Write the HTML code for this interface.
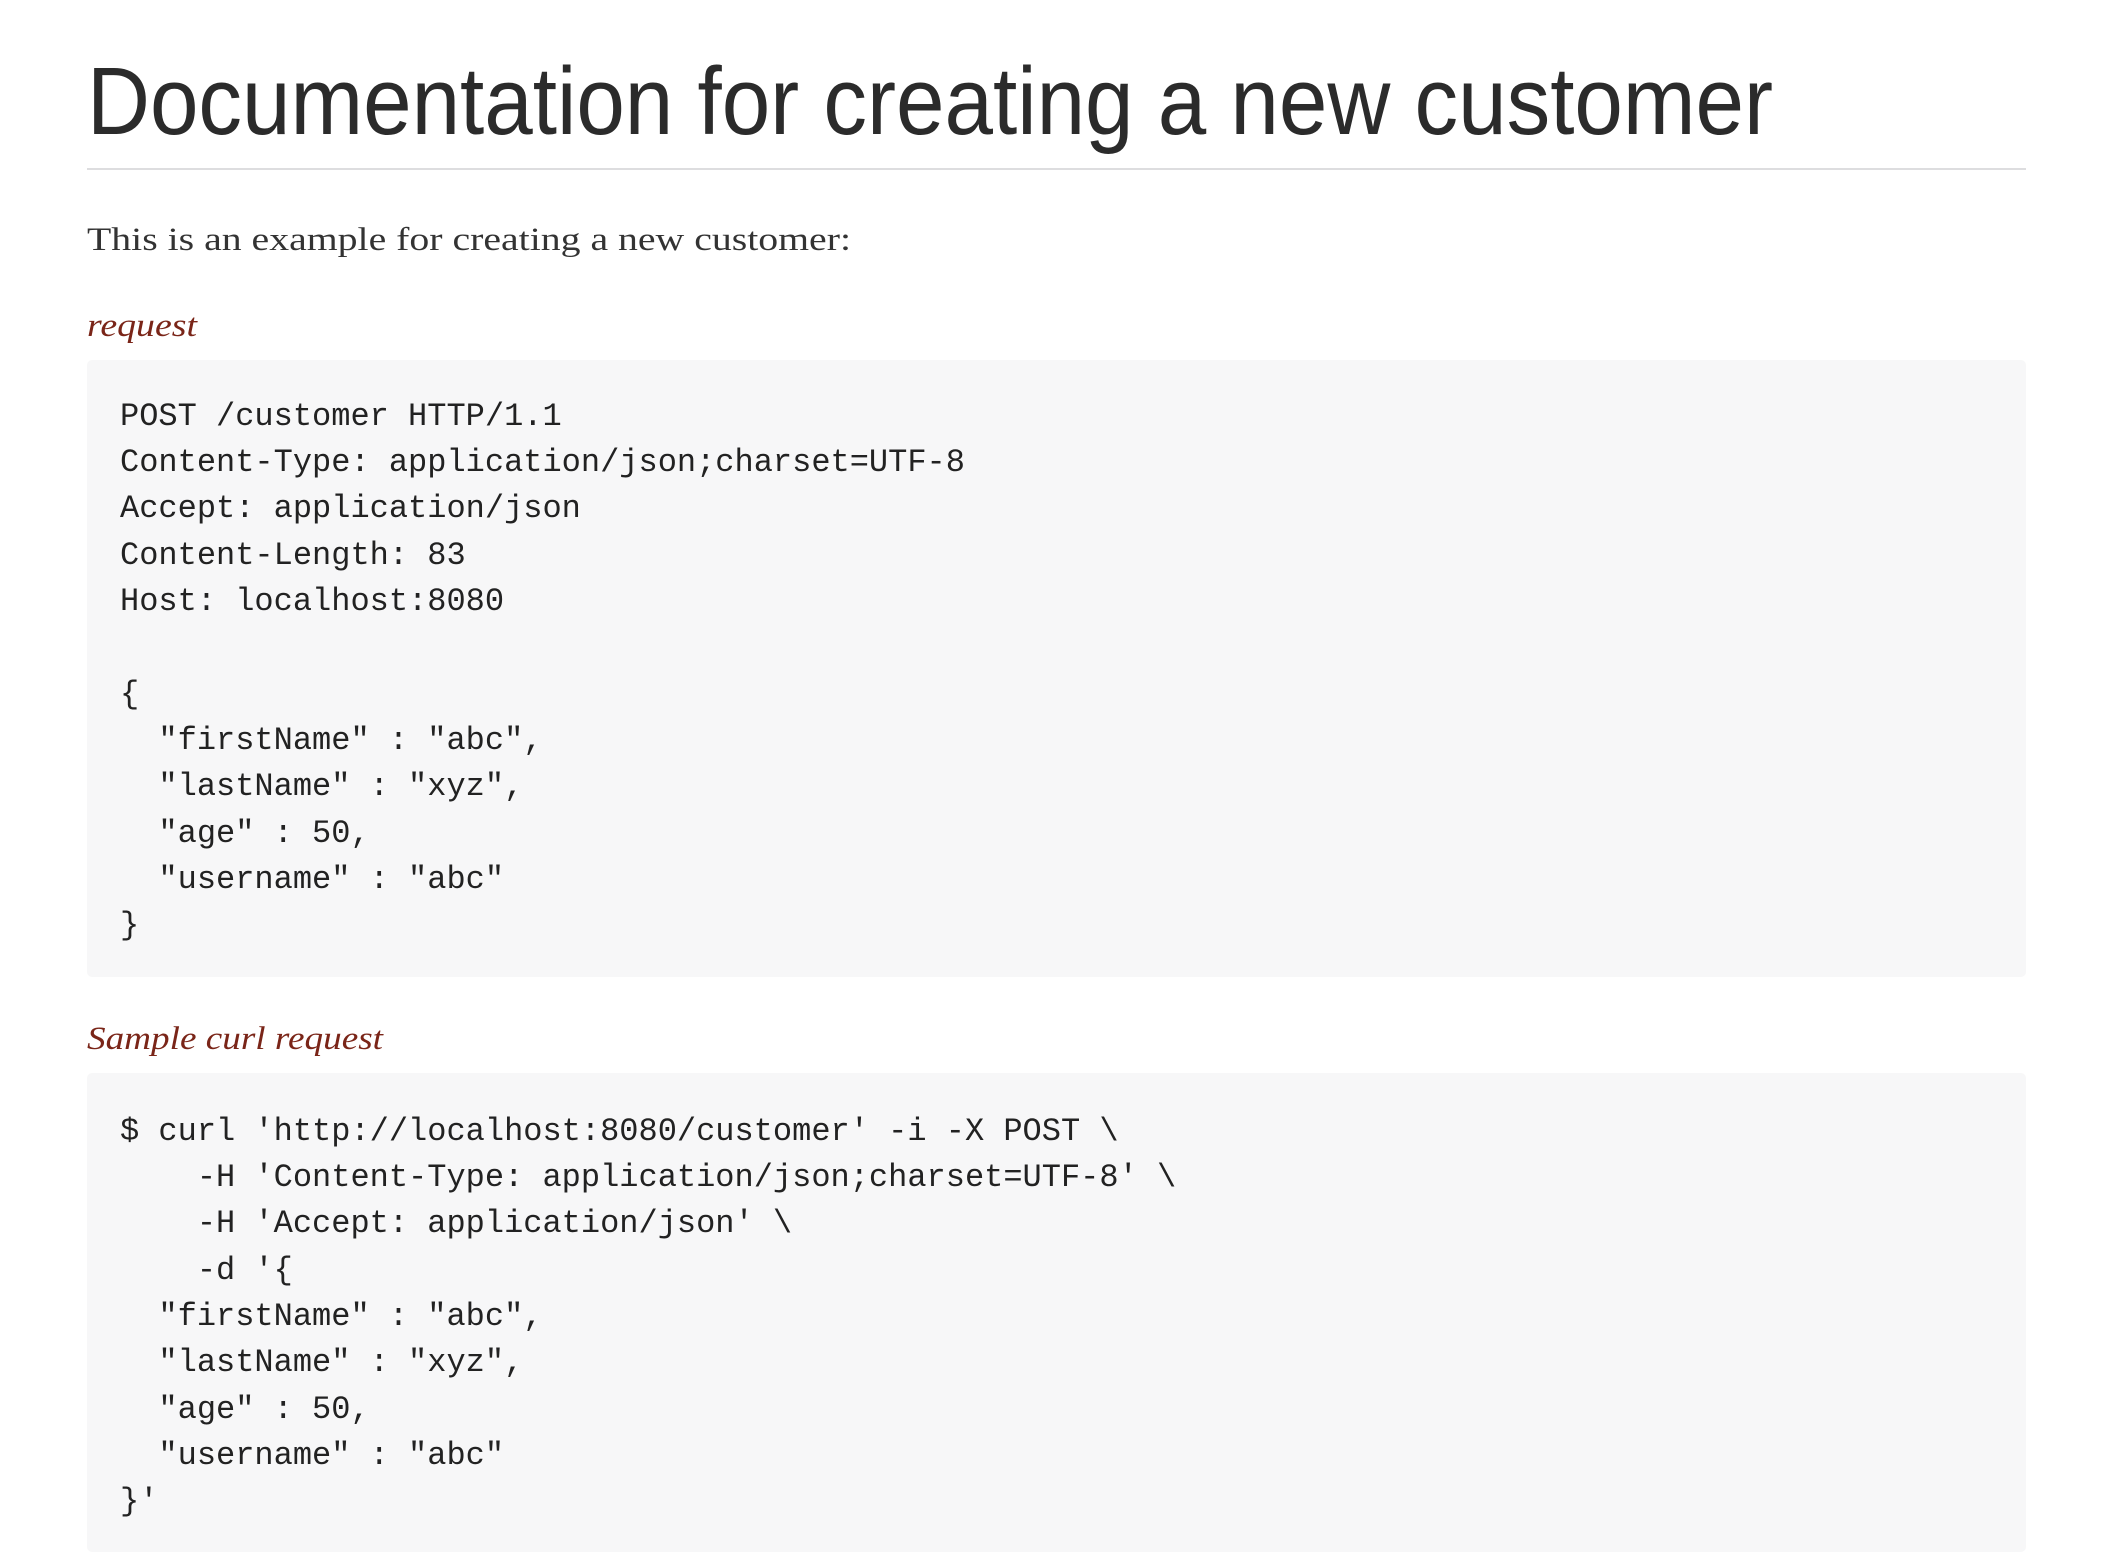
<!DOCTYPE html>
<html><head><meta charset="utf-8"><style>
html,body{margin:0;padding:0;background:#fff;width:2124px;height:1552px;overflow:hidden}
svg{display:block}
.code{font-family:"Liberation Mono",monospace;font-size:32px;fill:#222}
</style></head><body>
<svg width="2124" height="1552" viewBox="0 0 2124 1552" xmlns="http://www.w3.org/2000/svg">
<text x="87" y="134" font-family="Liberation Sans, sans-serif" font-size="96" fill="#2b2b2b" textLength="1686" lengthAdjust="spacingAndGlyphs">Documentation for creating a new customer</text>
<rect x="87" y="168" width="1950" height="2" fill="#dddddf" transform="scale(1,1)"/>
<text x="87" y="250" font-family="Liberation Serif, serif" font-size="33" fill="#333" textLength="764" lengthAdjust="spacingAndGlyphs">This is an example for creating a new customer:</text>
<text x="87" y="336" font-family="Liberation Serif, serif" font-style="italic" font-size="33" fill="#7a2518" textLength="110" lengthAdjust="spacingAndGlyphs">request</text>
<rect x="87" y="360" width="1950" height="617" rx="5" fill="#f7f7f8"/>
<g class="code">
<text x="120" y="425">POST /customer HTTP/1.1</text>
<text x="120" y="471">Content-Type: application/json;charset=UTF-8</text>
<text x="120" y="517">Accept: application/json</text>
<text x="120" y="564">Content-Length: 83</text>
<text x="120" y="610">Host: localhost:8080</text>
<text x="120" y="703">{</text>
<text x="120" y="749">&#160;&#160;"firstName" : "abc",</text>
<text x="120" y="795">&#160;&#160;"lastName" : "xyz",</text>
<text x="120" y="842">&#160;&#160;"age" : 50,</text>
<text x="120" y="888">&#160;&#160;"username" : "abc"</text>
<text x="120" y="934">}</text>
</g>
<text x="87" y="1049" font-family="Liberation Serif, serif" font-style="italic" font-size="33" fill="#7a2518" textLength="296" lengthAdjust="spacingAndGlyphs">Sample curl request</text>
<rect x="87" y="1073" width="1950" height="479" rx="5" fill="#f7f7f8"/>
<g class="code">
<text x="120" y="1140">$ curl 'http://localhost:8080/customer' -i -X POST \</text>
<text x="120" y="1186">&#160;&#160;&#160;&#160;-H 'Content-Type: application/json;charset=UTF-8' \</text>
<text x="120" y="1232">&#160;&#160;&#160;&#160;-H 'Accept: application/json' \</text>
<text x="120" y="1279">&#160;&#160;&#160;&#160;-d '{</text>
<text x="120" y="1325">&#160;&#160;"firstName" : "abc",</text>
<text x="120" y="1371">&#160;&#160;"lastName" : "xyz",</text>
<text x="120" y="1418">&#160;&#160;"age" : 50,</text>
<text x="120" y="1464">&#160;&#160;"username" : "abc"</text>
<text x="120" y="1510">}'</text>
</g>
</svg>
<style>rect[width="1950"]{width:1939px}</style>
</body></html>
